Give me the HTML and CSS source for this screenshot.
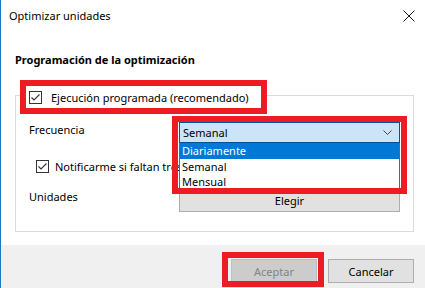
FILE: index.html
```html
<!DOCTYPE html>
<html lang="es">
<head>
    <meta charset="UTF-8">
    <title>Optimizar unidades</title>
    <link rel="stylesheet" href="styles.css">
</head>
<body>
    <div class="window">
        <div class="titlebar">
            <span class="title">Optimizar unidades</span>
            <svg class="close" width="12" height="12" viewBox="0 0 12 12">
                <path d="M0.5 0.5 L11.5 11.5 M11.5 0.5 L0.5 11.5" stroke="#1a1a1a" stroke-width="1" fill="none"/>
            </svg>
        </div>

        <div class="content">
            <div class="heading">Programación de la optimización</div>

            <div class="group">
                <label class="group-title">
                    <svg class="check" width="13" height="13" viewBox="0 0 13 13">
                        <rect x="0.5" y="0.5" width="12" height="12" fill="#fff" stroke="#333"/>
                        <path d="M2.5 6.5 L5 9 L10.5 3.5" stroke="#333" stroke-width="1.1" fill="none"/>
                    </svg>
                    Ejecución programada (recomendado)
                </label>

                <div class="row first">
                    <span class="row-label">Frecuencia</span>
                    <div class="combo-wrap">
                        <div class="combo">
                            <span>Semanal</span>
                            <svg width="9" height="5" viewBox="0 0 9 5">
                                <path d="M0.5 0.5 L4.5 4.5 L8.5 0.5" stroke="#444" stroke-width="1" fill="none"/>
                            </svg>
                        </div>
                        <ul class="combo-list">
                            <li class="selected">Diariamente</li>
                            <li>Semanal</li>
                            <li>Mensual</li>
                        </ul>
                    </div>
                </div>

                <label class="row notify">
                    <svg class="check" width="13" height="13" viewBox="0 0 13 13">
                        <rect x="0.5" y="0.5" width="12" height="12" fill="#fff" stroke="#333"/>
                        <path d="M2.5 6.5 L5 9 L10.5 3.5" stroke="#333" stroke-width="1.1" fill="none"/>
                    </svg>
                    <span>Notificarme si faltan tres ejecuciones programadas consecutivas</span>
                </label>

                <div class="row last">
                    <span class="row-label">Unidades</span>
                    <button class="btn wide">Elegir</button>
                </div>
            </div>
        </div>

        <div class="footer">
            <div class="btn-mark">
                <button class="btn" disabled>Aceptar</button>
            </div>
            <button class="btn">Cancelar</button>
        </div>
    </div>
</body>
</html>
```

FILE: styles.css
```css
*, *::before, *::after {
    box-sizing: border-box;
}
body {
    margin: 0;
    width: 425px;
    height: 288px;
    overflow: hidden;
    font-family: "Noto Sans", "Open Sans", sans-serif;
    font-size: 11px;
    color: #000;
    background: #fff;
}
.window {
    height: 288px;
    border-left: 1px solid #1979ca;
    display: flex;
    flex-direction: column;
    background: #fff;
}
.titlebar {
    height: 31px;
    flex-shrink: 0;
    display: flex;
    align-items: center;
    justify-content: space-between;
    padding: 0 10px 0 8px;
}
.content {
    flex: 1;
    padding: 21px 11px 0 14px;
}
.heading {
    font-weight: bold;
    line-height: 16px;
    margin-bottom: 27px;
}
.group {
    height: 137px;
    border: 1px solid #dcdcdc;
    padding: 0 13px 0 13px;
}
.check {
    flex-shrink: 0;
}
.group-title {
    display: flex;
    align-items: center;
    gap: 9px;
    width: 235px;
    height: 22px;
    margin: -10px 0 0 -3px;
    padding: 0 0 0 3px;
    background: #fff;
    outline: 6px solid #ed1c24;
    white-space: nowrap;
}
.row {
    display: flex;
    align-items: flex-start;
    line-height: 16px;
}
.row-label {
    width: 150px;
    flex-shrink: 0;
}
.row.first {
    margin-top: 14px;
}
.notify {
    margin: 15px 0 0 7px;
    gap: 6px;
    align-items: center;
    white-space: nowrap;
    height: 17px;
}
.row.last {
    margin-top: 14px;
}
.combo-wrap {
    position: relative;
    width: 221px;
    z-index: 2;
}
.combo-wrap::after {
    content: "";
    position: absolute;
    top: -6px;
    left: -7px;
    right: -7px;
    height: 78px;
    border: 6px solid #ed1c24;
}
.combo {
    height: 21px;
    display: flex;
    align-items: center;
    justify-content: space-between;
    padding: 0 4px 0 3px;
    background: #cce4f7;
    border: 1px solid #005499;
}
.combo svg {
    margin-right: 3px;
}
.combo-list {
    position: absolute;
    top: 21px;
    left: 0;
    right: 0;
    margin: 0;
    padding: 0;
    list-style: none;
    background: #fff;
    border: 1px solid #646464;
    border-top: none;
}
.combo-list li {
    height: 15px;
    line-height: 15px;
    padding-left: 2px;
}
.combo-list .selected {
    background: #0078d7;
    color: #fff;
    height: 16px;
}
.btn {
    font-family: inherit;
    font-size: 11px;
    width: 86px;
    height: 24px;
    padding: 0;
    background: #e1e1e1;
    border: 1px solid #adadad;
    color: #000;
}
.btn:disabled {
    background: #cccccc;
    border-color: #bfbfbf;
    color: #838383;
}
.btn.wide {
    width: 222px;
    height: 23px;
}
.footer {
    height: 43px;
    flex-shrink: 0;
    background: #f0f0f0;
    display: flex;
    justify-content: flex-end;
    gap: 11px;
    padding: 14px 11px 0 0;
}
.btn-mark {
    position: relative;
    height: 24px;
}
.btn-mark::after {
    content: "";
    position: absolute;
    top: -7px;
    left: -9px;
    right: -7px;
    bottom: -4px;
    border: 6px solid #ed1c24;
}
```
